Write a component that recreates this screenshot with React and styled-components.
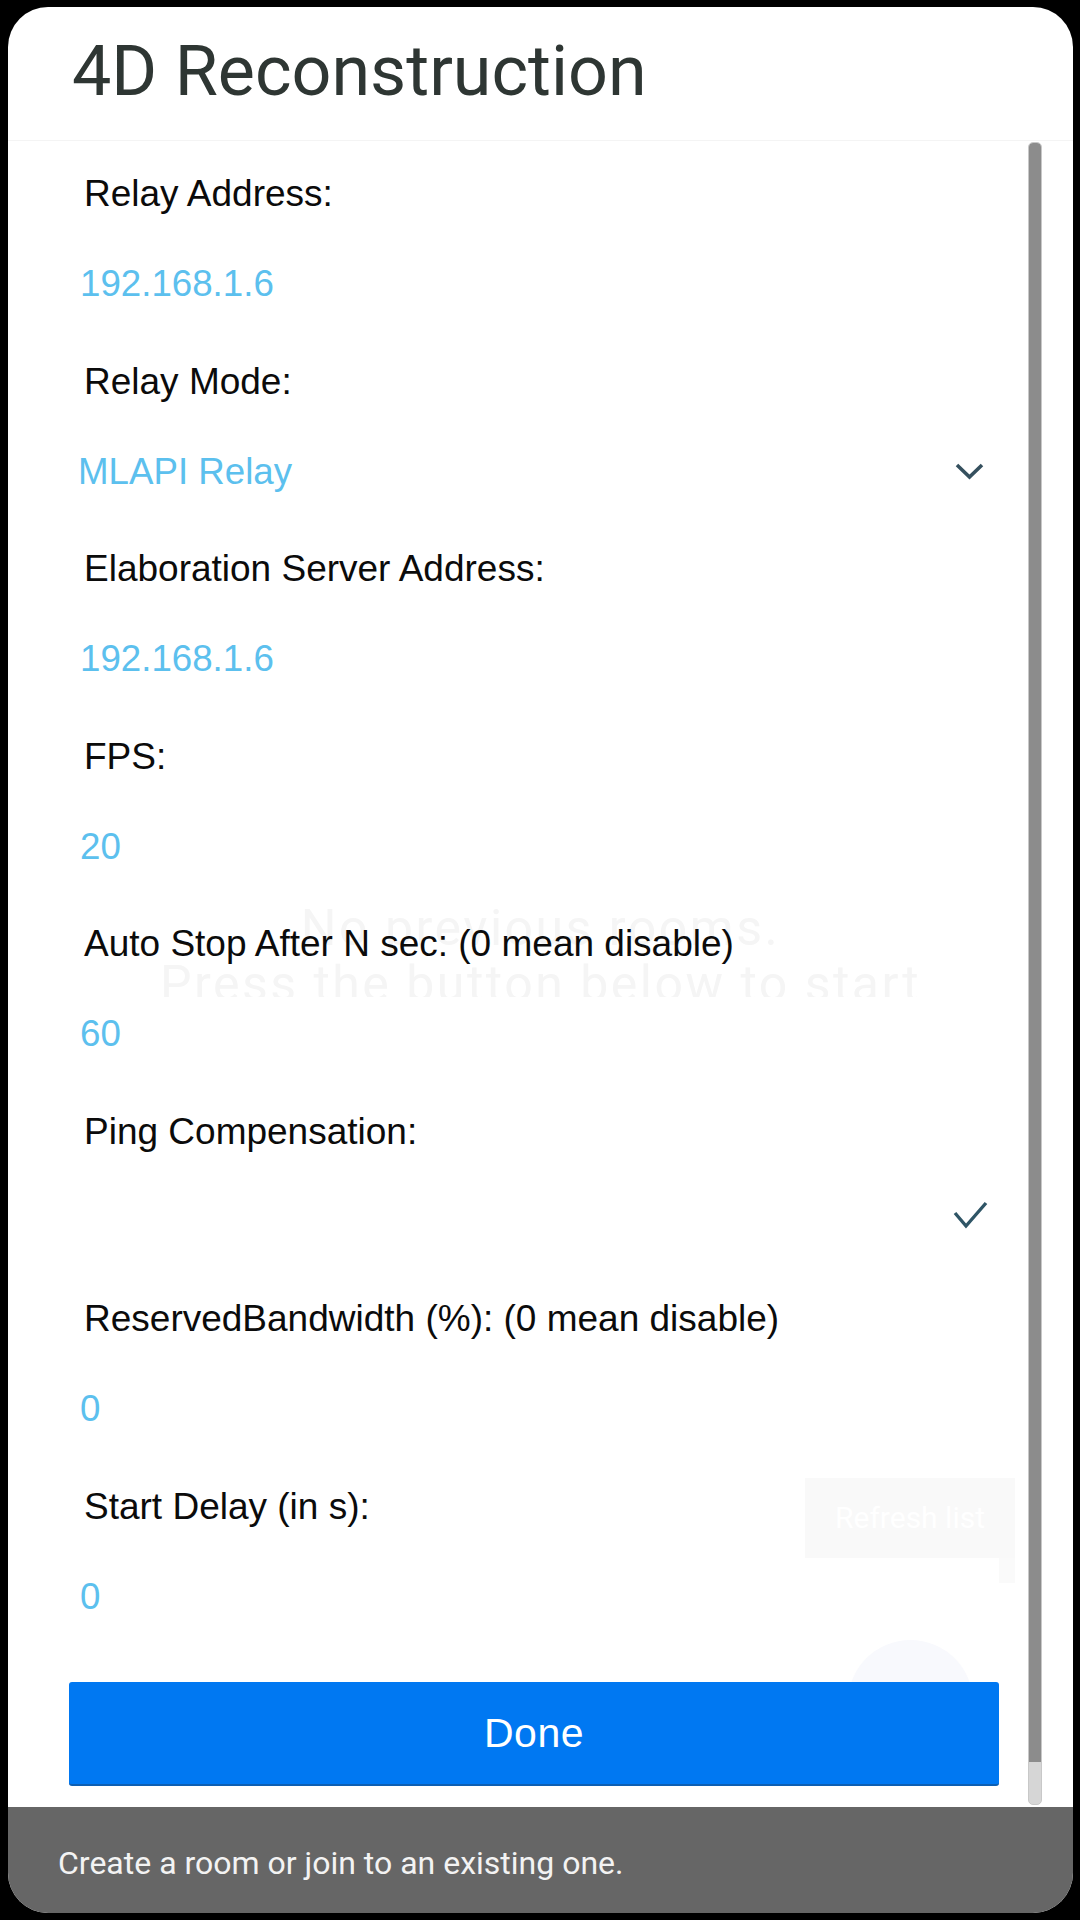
import React from "react";
import styled, { createGlobalStyle } from "styled-components";

///////////////////////////////////

const GlobalStyle = createGlobalStyle`
  html, body {
    margin: 0;
    padding: 0;
    background: #000;
  }
  body {
    width: 1080px;
    height: 1920px;
    overflow: hidden;
  }
`;

const Frame = styled.div`
  width: 1080px;
  height: 1920px;
  background: #000;
  padding: 7px 7px 7px 8px;
  box-sizing: border-box;
`;

const Screen = styled.div`
  position: relative;
  height: 1906px;
  border-radius: 40px;
  overflow: hidden;
  background: #fff;
  display: flex;
  flex-direction: column;
`;

const Header = styled.div`
  height: 134px;
  box-sizing: border-box;
  padding: 29px 0 0 64px;
  border-bottom: 1px solid #f4f4f4;
  position: relative;
  z-index: 1;
`;

const Title = styled.h1`
  margin: 0;
  font-family: Roboto, "Liberation Sans", sans-serif;
  font-weight: 400;
  font-size: 70px;
  line-height: 70px;
  color: #2e3633;
`;

const Body = styled.div`
  flex: 1;
  display: flex;
  position: relative;
  z-index: 1;
`;

const Form = styled.div`
  width: 930px;
  padding: 30px 0 0 61px;
  display: flex;
  flex-direction: column;
`;

const Field = styled.div`
  margin-bottom: 51.5px;
`;

const Label = styled.div`
  font-family: "Liberation Sans", Arial, sans-serif;
  font-size: 37px;
  line-height: 46px;
  height: 46px;
  color: #0b0b0b;
  padding-left: 15px;
  margin-bottom: 44px;
  white-space: nowrap;
`;

const ValueRow = styled.div`
  height: 46px;
  display: flex;
  align-items: center;
  justify-content: space-between;
  padding-left: ${(p) => p.$indent}px;
`;

const Value = styled.span`
  font-family: "Liberation Sans", Arial, sans-serif;
  font-size: 36.7px;
  line-height: 46px;
  color: #5cc0ee;
`;

const Chevron = styled.svg`
  width: 29px;
  height: 17px;
  margin-right: 15px;
`;

const Check = styled.svg`
  width: 35px;
  height: 28px;
  margin-right: 11px;
  margin-bottom: 14px;
`;

const DoneButton = styled.button`
  margin-top: 11px;
  width: 930px;
  height: 104px;
  border: none;
  border-bottom: 2px solid #0d5fb3;
  border-radius: 3px;
  background: #0078f2;
  color: #fff;
  font-family: "Liberation Sans", Arial, sans-serif;
  font-size: 41px;
  letter-spacing: 0.5px;
  padding: 0;
`;

const ScrollTrack = styled.div`
  width: 14px;
  margin: 1px 0 2px 29px;
  border-radius: 5px;
  background: #d6d6d6;
  border: 1px solid #c8c8c8;
  box-sizing: border-box;
  overflow: hidden;
  display: flex;
  flex-direction: column;
`;

const ScrollThumb = styled.div`
  height: ${(p) => p.$size}%;
  background: #8c8c8c;
  border-radius: 4px 4px 0 0;
`;

const Footer = styled.div`
  height: 106px;
  box-sizing: border-box;
  background: #666;
  padding: 40px 0 0 50px;
  font-family: Roboto, "Liberation Sans", sans-serif;
  font-size: 32px;
  line-height: 32px;
  color: #f3f3f3;
  position: relative;
  z-index: 1;
`;

// faint page content that shows under the dialog
const GhostText = styled.div`
  position: absolute;
  left: 0;
  right: 0;
  top: 893px;
  height: 97px;
  overflow: hidden;
  text-align: center;
  font-family: Roboto, sans-serif;
  font-size: 50px;
  letter-spacing: 2.5px;
  line-height: 56px;
  color: #f5f5f5;
`;

const GhostButton = styled.div`
  position: absolute;
  left: 797px;
  top: 1471px;
  width: 210px;
  height: 80px;
  background: #f9f9f9;
  color: #fff;
  font-family: Roboto, sans-serif;
  font-size: 30px;
  line-height: 80px;
  text-align: center;

  &::after {
    content: "";
    position: absolute;
    right: 0;
    top: 100%;
    width: 16px;
    height: 25px;
    background: #fafafa;
  }
`;

const GhostFab = styled.div`
  position: absolute;
  left: 840px;
  top: 1633px;
  width: 125px;
  height: 125px;
  border-radius: 50%;
  background: #f8f9fd;
`;

///////////////////////////////////

const fields = [
  { label: "Relay Address:", value: "192.168.1.6" },
  { label: "Relay Mode:", value: "MLAPI Relay", kind: "select" },
  { label: "Elaboration Server Address:", value: "192.168.1.6" },
  { label: "FPS:", value: "20" },
  { label: "Auto Stop After N sec: (0 mean disable)", value: "60" },
  { label: "Ping Compensation:", kind: "toggle" },
  { label: "ReservedBandwidth (%): (0 mean disable)", value: "0" },
  { label: "Start Delay (in s):", value: "0" },
];

const FieldRow = ({ label, value, kind }) => (
  <Field>
    <Label>{label}</Label>
    <ValueRow $indent={kind === "select" ? 9 : 11}>
      <Value>{value}</Value>
      {kind === "select" && (
        <Chevron viewBox="0 0 29 17">
          <polyline points="2,2 14.5,14 27,2" fill="none" stroke="#35505e" strokeWidth="3.6" />
        </Chevron>
      )}
      {kind === "toggle" && (
        <Check viewBox="0 0 35 28">
          <polyline points="2,12 13,25 33,2" fill="none" stroke="#2f5566" strokeWidth="3.4" />
        </Check>
      )}
    </ValueRow>
  </Field>
);

const App = () => {

  return (

    <Frame>

      <GlobalStyle />

      <Screen>

        <GhostText>
          No previous rooms.
          <br />
          Press the button below to start
        </GhostText>

        <GhostButton>Refresh list</GhostButton>

        <GhostFab />

        <Header>
          <Title>4D Reconstruction</Title>
        </Header>

        <Body>

          <Form>
            {fields.map((f) => (
              <FieldRow key={f.label} {...f} />
            ))}
            <DoneButton>Done</DoneButton>
          </Form>

          <ScrollTrack>
            <ScrollThumb $size={97.5} />
          </ScrollTrack>

        </Body>

        <Footer>Create a room or join to an existing one.</Footer>

      </Screen>

    </Frame>

  );

};

export default App;
